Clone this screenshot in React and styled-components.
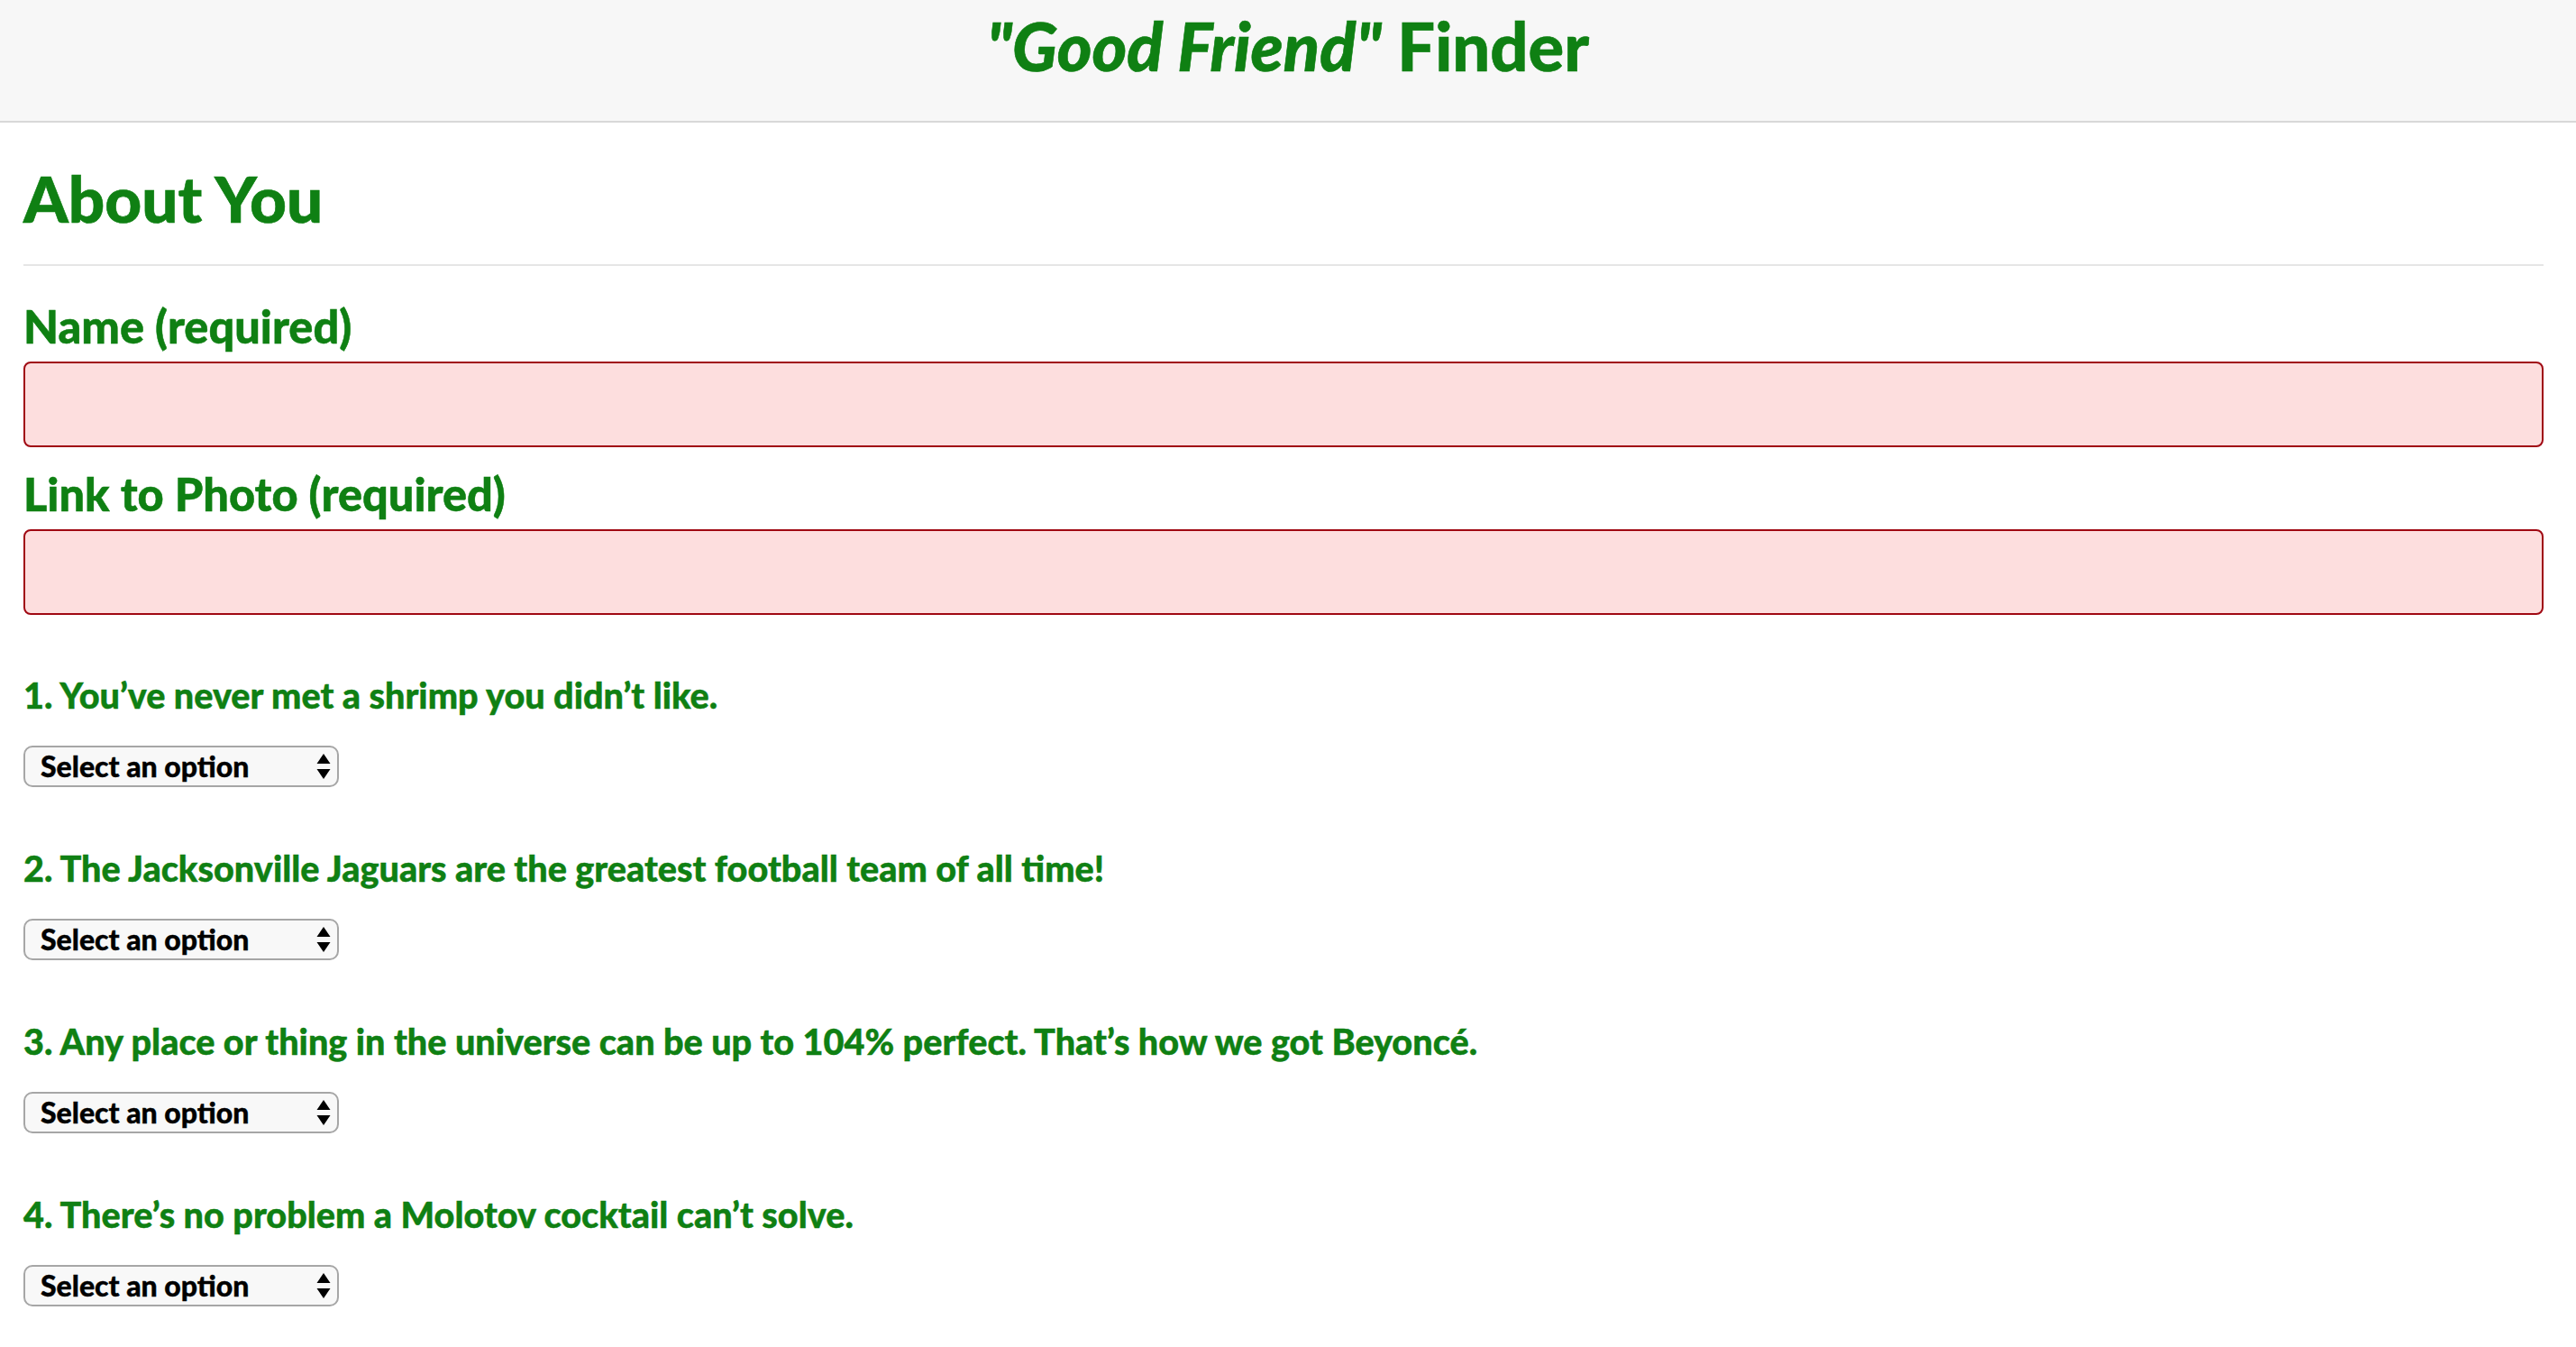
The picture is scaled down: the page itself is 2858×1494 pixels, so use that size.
import React from "react";
import styled, { createGlobalStyle } from "styled-components";

const GREEN = "#0f8013";

const Global = createGlobalStyle`
  html, body {
    margin: 0;
    padding: 0;
    background: #ffffff;
    font-family: Lato, "Noto Sans", "Liberation Sans", sans-serif;
  }
  * { box-sizing: border-box; }
`;

const Header = styled.header`
  height: 136px;
  padding-top: 7px;
  background: #f7f7f7;
  border-bottom: 2px solid #d8d8d8;
  text-align: center;
`;

const Title = styled.h1`
  margin: 0;
  font-size: 74px;
  line-height: 1.2;
  font-weight: 900;
  color: ${GREEN};
  -webkit-text-stroke: 0.6px ${GREEN};
`;

const Em = styled.em`
  font-style: italic;
`;

const Main = styled.main`
  padding: 41px 36px 40px 26px;
`;

const SectionTitle = styled.h2`
  margin: 0;
  font-size: 71px;
  line-height: 1.2;
  font-weight: 900;
  color: ${GREEN};
  -webkit-text-stroke: 0.6px ${GREEN};
`;

const Rule = styled.hr`
  margin: 30.8px 0 0;
  border: 0;
  height: 2px;
  background: #e6e6e6;
`;

const Field = styled.div`
  display: flex;
  flex-direction: column;
  gap: 8.2px;
  margin-top: ${(p) => p.$top}px;
`;

const FieldLabel = styled.label`
  font-size: 50.5px;
  line-height: 1.2;
  font-weight: 900;
  color: ${GREEN};
  -webkit-text-stroke: 0.5px ${GREEN};
`;

const TextInput = styled.input`
  display: block;
  width: 100%;
  height: 95px;
  margin: 0;
  border: 2px solid #a00812;
  border-radius: 8px;
  background: #fddede;
  font-family: inherit;
  font-size: 36px;
  padding: 0 16px;
  outline: none;
`;

const Question = styled.div`
  display: flex;
  flex-direction: column;
  align-items: flex-start;
  gap: 32.6px;
  margin-top: ${(p) => p.$top}px;
`;

const QuestionText = styled.label`
  font-size: 39.6px;
  line-height: 1.2;
  font-weight: 900;
  color: ${GREEN};
  -webkit-text-stroke: 0.45px ${GREEN};
`;

const SelectWrap = styled.div`
  position: relative;
  width: 350px;
  height: 46px;
`;

const Select = styled.select`
  appearance: none;
  -webkit-appearance: none;
  width: 100%;
  height: 100%;
  margin: 0;
  padding: 0 40px 0 17px;
  border: 2px solid #a6a6a6;
  border-radius: 10px;
  background: #f8f8f8;
  color: #000;
  font-family: Lato, "Noto Sans", "Liberation Sans", sans-serif;
  font-size: 32px;
  font-weight: 900;
  line-height: 42px;
  -webkit-text-stroke: 0.4px #000;
  outline: none;
`;

const Arrows = styled.svg`
  position: absolute;
  right: 9px;
  top: 9px;
  width: 16px;
  height: 28px;
  pointer-events: none;
`;

const questions = [
  "1. You\u2019ve never met a shrimp you didn\u2019t like.",
  "2. The Jacksonville Jaguars are the greatest football team of all time!",
  "3. Any place or thing in the universe can be up to 104% perfect. That\u2019s how we got Beyonc\u00e9.",
  "4. There\u2019s no problem a Molotov cocktail can\u2019t solve.",
];

function OptionSelect({ id }) {
  return (
    <SelectWrap>
      <Select id={id} defaultValue="">
        <option value="">Select an option</option>
        <option value="1">1 (Strongly Disagree)</option>
        <option value="2">2</option>
        <option value="3">3</option>
        <option value="4">4</option>
        <option value="5">5 (Strongly Agree)</option>
      </Select>
      <Arrows viewBox="0 0 16 28">
        <polygon points="8,0 15.5,11 0.5,11" fill="#000" />
        <polygon points="0.5,17 15.5,17 8,28" fill="#000" />
      </Arrows>
    </SelectWrap>
  );
}

export default function App() {
  return (
    <>
      <Global />
      <Header>
        <Title>
          <Em>"Good Friend"</Em> Finder
        </Title>
      </Header>
      <Main>
        <SectionTitle>About You</SectionTitle>
        <Rule />
        <Field $top={37.2}>
          <FieldLabel htmlFor="name">Name (required)</FieldLabel>
          <TextInput id="name" type="text" />
        </Field>
        <Field $top={22.2}>
          <FieldLabel htmlFor="photo">Link to Photo (required)</FieldLabel>
          <TextInput id="photo" type="text" />
        </Field>
        {questions.map((q, i) => (
          <Question key={i} $top={i === 0 ? 64.9 : 65.9}>
            <QuestionText htmlFor={`q${i + 1}`}>{q}</QuestionText>
            <OptionSelect id={`q${i + 1}`} />
          </Question>
        ))}
      </Main>
    </>
  );
}
